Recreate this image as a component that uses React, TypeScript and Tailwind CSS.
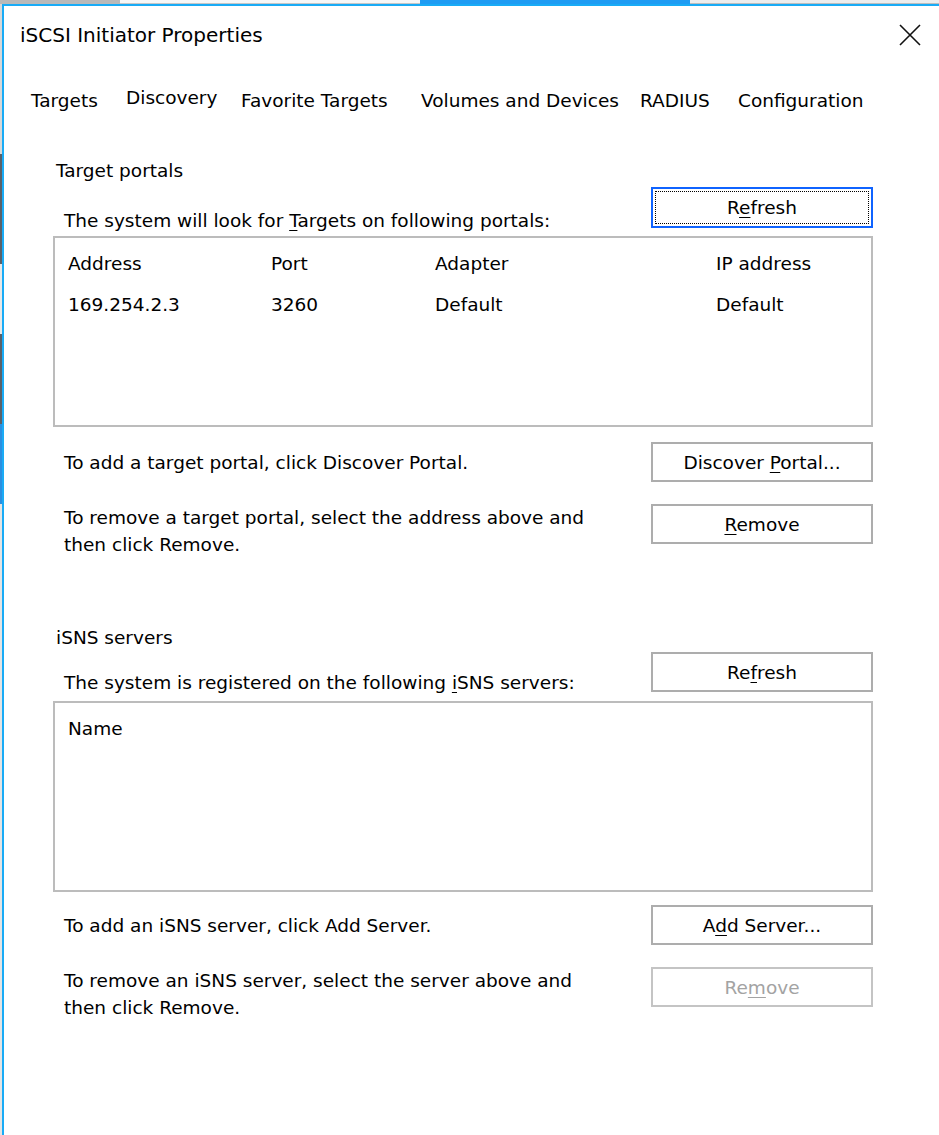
function Mn({ children }: { children: string }) {
  return <span className="underline decoration-1 underline-offset-[3px]">{children}</span>;
}

function Btn({
  children,
  focused = false,
  disabled = false,
  tall = false,
}: {
  children: React.ReactNode;
  focused?: boolean;
  disabled?: boolean;
  tall?: boolean;
}) {
  const border = focused
    ? "border-[#0f63ff]"
    : disabled
      ? "border-[#c4c4c4]"
      : "border-[#adadad]";
  return (
    <div
      className={`flex w-[222px] shrink-0 border-2 bg-white ${border} ${tall ? "h-[41px]" : "h-[40px]"} ${disabled ? "text-[#a3a3a3]" : "text-black"}`}
    >
      <div
        className={`flex flex-1 items-center justify-center ${focused ? "m-[2px] border border-dotted border-black" : ""}`}
      >
        <span className="leading-[27px]">{children}</span>
      </div>
    </div>
  );
}

function ListBox({ children }: { children: React.ReactNode }) {
  return (
    <div className="h-[191px] border-2 border-[#bcbcbc] bg-white pt-[12px] pl-[13px]">
      {children}
    </div>
  );
}

const tabs = [
  { label: "Targets", w: "w-[95px]" },
  { label: "Discovery", w: "w-[115px]", active: true },
  { label: "Favorite Targets", w: "w-[180px]" },
  { label: "Volumes and Devices", w: "w-[219px]" },
  { label: "RADIUS", w: "w-[98px]" },
  { label: "Configuration", w: "w-auto" },
];

export default function App() {
  return (
    <div
      className="flex h-[1135px] w-[939px] flex-col overflow-hidden bg-white text-[18.5px] text-black"
      style={{ fontFamily: '"DejaVu Sans", Verdana, sans-serif' }}
    >
      {/* desktop behind the dialog */}
      <div className="flex h-[4px] shrink-0">
        <div className="w-[120px] bg-[#b9b9b9]" />
        <div className="w-[300px] border-b border-[#c6c6c6] bg-[#f7f7f7]" />
        <div className="w-[270px] bg-[#1f9cf3]" />
        <div className="flex-1 border-b border-[#bdbdbd] bg-[#ededed]" />
      </div>

      <div className="flex flex-1">
        <div className="flex w-[2px] flex-col">
          <div className="h-[150px] bg-[#d8d8d8]" />
          <div className="h-[110px] bg-[#5a6068]" />
          <div className="h-[70px] bg-[#e8e8e8]" />
          <div className="h-[90px] bg-[#5a6068]" />
          <div className="h-[80px] bg-[#2a8fe0]" />
          <div className="flex-1 bg-[#e4e4e4]" />
        </div>

        <div className="flex flex-1 flex-col border-t-2 border-l-2 border-[#19abf6]">
          {/* title bar */}
          <div className="flex items-center justify-between pt-[15px] pr-[17px] pl-[16px]">
            <span className="text-[20px] leading-[28px]">iSCSI Initiator Properties</span>
            <svg width="24" height="24" viewBox="0 0 24 24" fill="none" aria-hidden="true">
              <path d="M2 2L22 22M22 2L2 22" stroke="#111" strokeWidth="1.6" />
            </svg>
          </div>

          {/* tabs */}
          <div className="mt-[39px] flex pl-[27px] leading-[26px]">
            {tabs.map((t) => (
              <div key={t.label} className={`${t.w} shrink-0`}>
                <span className={t.active ? "relative -top-[3px]" : ""}>{t.label}</span>
              </div>
            ))}
          </div>

          {/* Discovery page */}
          <div className="mt-[43px] ml-[49px] flex w-[820px] flex-col leading-[27px]">
            <div className="pl-[3px]">Target portals</div>

            <div className="mt-[3px] flex items-start justify-between">
              <div className="mt-[20px] pl-[11px]">
                The system will look for <Mn>T</Mn>argets on following portals:
              </div>
              <Btn focused tall>
                R<Mn>e</Mn>fresh
              </Btn>
            </div>

            <div className="mt-[2px]">
              <ListBox>
                <div className="grid grid-cols-[203px_164px_281px_1fr]">
                  <span>Address</span>
                  <span>Port</span>
                  <span>Adapter</span>
                  <span>IP address</span>
                </div>
                <div className="mt-[14px] grid grid-cols-[203px_164px_281px_1fr]">
                  <span>169.254.2.3</span>
                  <span>3260</span>
                  <span>Default</span>
                  <span>Default</span>
                </div>
              </ListBox>
            </div>

            <div className="mt-[15px] flex items-center justify-between">
              <div className="pl-[11px]">To add a target portal, click Discover Portal.</div>
              <Btn>
                Discover <Mn>P</Mn>ortal...
              </Btn>
            </div>

            <div className="mt-[22px] flex items-start justify-between">
              <div className="pl-[11px]">
                To remove a target portal, select the address above and
                <br />
                then click Remove.
              </div>
              <Btn>
                <Mn>R</Mn>emove
              </Btn>
            </div>

            <div className="mt-[66px] pl-[3px]">iSNS servers</div>

            <div className="mt-[1px] flex items-start justify-between">
              <div className="mt-[17px] pl-[11px]">
                The system is registered on the following <Mn>i</Mn>SNS servers:
              </div>
              <Btn>
                Re<Mn>f</Mn>resh
              </Btn>
            </div>

            <div className="mt-[5px]">
              <ListBox>
                <span>Name</span>
              </ListBox>
            </div>

            <div className="mt-[13px] flex items-center justify-between">
              <div className="pl-[11px]">To add an iSNS server, click Add Server.</div>
              <Btn>
                A<Mn>d</Mn>d Server...
              </Btn>
            </div>

            <div className="mt-[22px] flex items-start justify-between">
              <div className="pl-[11px]">
                To remove an iSNS server, select the server above and
                <br />
                then click Remove.
              </div>
              <Btn disabled>
                Re<Mn>m</Mn>ove
              </Btn>
            </div>
          </div>
        </div>
      </div>
    </div>
  );
}
